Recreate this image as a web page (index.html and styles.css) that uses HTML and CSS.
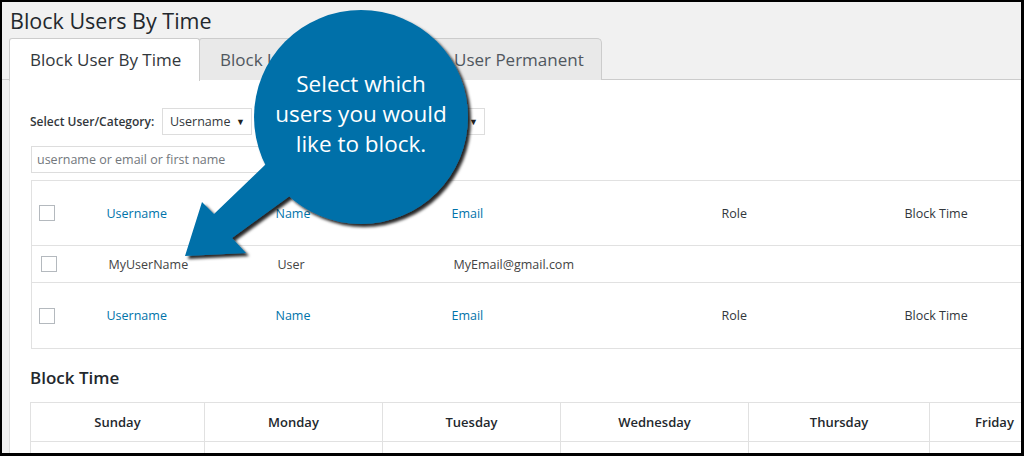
FILE: index.html
```html
<!DOCTYPE html>
<html lang="en">
<head>
<meta charset="utf-8">
<title>Block Users By Time</title>
<link rel="stylesheet" href="styles.css">
</head>
<body>
<div class="screen">
  <h1 class="page-title">Block Users By Time</h1>
  <div class="tabs">
    <div class="tab active">Block User By Time</div>
    <div class="tab">Block User By Date</div>
    <div class="tab">Block User Permanent</div>
  </div>
  <div class="panel">
    <div class="filter-row">
      <span class="filter-label">Select User/Category:</span>
      <div class="select sel-user"><span>Username</span><span class="caret">&#9660;</span></div>
      <div class="select sel-role"><span>Select Role</span><span class="caret">&#9660;</span></div>
    </div>
    <div class="search">username or email or first name</div>

    <table class="users">
      <colgroup>
        <col class="c-cb"><col class="c-user"><col class="c-name"><col class="c-email"><col class="c-role"><col class="c-time">
      </colgroup>
      <thead>
        <tr class="head">
          <th><span class="cb"></span></th>
          <th class="link">Username</th>
          <th class="link">Name</th>
          <th class="link">Email</th>
          <th>Role</th>
          <th>Block Time</th>
        </tr>
      </thead>
      <tbody>
        <tr class="data">
          <td><span class="cb"></span></td>
          <td>MyUserName</td>
          <td>User</td>
          <td>MyEmail@gmail.com</td>
          <td></td>
          <td></td>
        </tr>
      </tbody>
      <tfoot>
        <tr class="head">
          <th><span class="cb"></span></th>
          <th class="link">Username</th>
          <th class="link">Name</th>
          <th class="link">Email</th>
          <th>Role</th>
          <th>Block Time</th>
        </tr>
      </tfoot>
    </table>

    <h2 class="section-title">Block Time</h2>
    <table class="schedule">
      <colgroup>
        <col class="d1"><col class="d2"><col class="d3"><col class="d4"><col class="d5"><col class="d6"><col class="d7">
      </colgroup>
      <thead>
        <tr>
          <th>Sunday</th><th>Monday</th><th>Tuesday</th><th>Wednesday</th><th>Thursday</th><th>Friday</th><th>Saturday</th>
        </tr>
      </thead>
      <tbody>
        <tr><td></td><td></td><td></td><td></td><td></td><td></td><td></td></tr>
      </tbody>
    </table>
  </div>

  <div class="callout">
    <svg class="callout-shape" viewBox="2 2 1019 451" width="1019" height="451" aria-hidden="true">
      <defs>
        <filter id="shadow" x="-20%" y="-20%" width="140%" height="140%">
          <feDropShadow dx="3" dy="3" stdDeviation="1.4" flood-color="#000" flood-opacity="0.85"/>
        </filter>
      </defs>
      <g filter="url(#shadow)" fill="#0070a9">
        <circle cx="361" cy="117" r="107"/>
        <polygon points="185,256 202,202 214,214 266,164 298,190 232,238 246,253"/>
      </g>
    </svg>
    <div class="callout-text">Select which<br>users you would<br>like to block.</div>
  </div>
</div>
</body>
</html>
```

FILE: styles.css
```css
* { box-sizing: border-box; }

html, body {
  margin: 0;
  padding: 0;
  background: #000;
}

body {
  width: 1024px;
  height: 456px;
  overflow: hidden;
  font-family: "Open Sans", "Noto Sans", sans-serif;
  color: #444;
}

.screen {
  position: relative;
  margin: 2px 3px 3px 2px;
  width: 1019px;
  height: 451px;
  background: #f1f1f1;
  overflow: hidden;
}

.page-title {
  margin: 0;
  padding: 4px 0 0 8px;
  height: 36px;
  font-size: 21.5px;
  font-weight: 400;
  color: #23282d;
  line-height: 29px;
}

.tabs {
  display: flex;
  padding-left: 7px;
  border-bottom: 1px solid #ccc;
  height: 42px;
}

.tab {
  height: 42px;
  padding: 0 20px;
  margin-right: -1px;
  border: 1px solid #ccc;
  border-bottom: none;
  border-radius: 3px 3px 0 0;
  background: #e9e9e9;
  font-size: 17px;
  line-height: 42px;
  color: #50575e;
  white-space: nowrap;
}

.tab.active {
  background: #fff;
  height: 43px;
  margin-bottom: -1px;
  position: relative;
  z-index: 1;
  width: 191px;
  color: #32373c;
}

.tab:nth-child(2) { width: 188px; }
.tab:nth-child(3) { width: 216px; border-radius: 3px 5px 0 0; }

.panel {
  margin-left: 7px;
  background: #fff;
  border-left: 1px solid #ddd;
  height: 400px;
  padding: 28px 0 0 20px;
}

.filter-row {
  display: flex;
  align-items: center;
  height: 27px;
}

.filter-label {
  font-size: 12px;
  font-weight: 600;
  color: #32373c;
  width: 132px;
}

.select {
  display: flex;
  align-items: center;
  justify-content: space-between;
  height: 27px;
  border: 1px solid #ddd;
  padding: 0 6px 0 7px;
  font-size: 12.5px;
  color: #32373c;
}

.sel-user { width: 90px; }
.sel-role { width: 150px; margin-left: 83px; }

.caret {
  font-size: 9px;
  color: #222;
}

.search {
  margin-top: 11px;
  margin-left: 1px;
  width: 240px;
  height: 27px;
  border: 1px solid #ddd;
  padding: 0 5px;
  font-size: 12.5px;
  line-height: 25px;
  color: #72777c;
}

.users {
  margin-top: 7px;
  margin-left: 1px;
  width: 1000px;
  table-layout: fixed;
  border-collapse: collapse;
  border: 1px solid #e1e1e1;
  font-size: 12.5px;
}

.c-cb { width: 65px; }
.c-user { width: 169px; }
.c-name { width: 176px; }
.c-email { width: 270px; }
.c-role { width: 183px; }
.c-time { width: 137px; }

.users th, .users td {
  padding: 0 0 0 10px;
  text-align: left;
  font-weight: 400;
  color: #32373c;
  white-space: nowrap;
}

.users th:first-child, .users td:first-child { padding-left: 7px; }

.users .head { height: 65px; }
.users thead .head { border-bottom: 1px solid #e1e1e1; }
.users tfoot .head { border-top: 1px solid #e1e1e1; height: 66px; }

.users .data { height: 37px; }
.users .data td { padding-left: 12px; color: #444; }
.users .data td:first-child { padding-left: 9px; }

.users .link { color: #0073aa; }

.cb {
  display: block;
  width: 16px;
  height: 16px;
  border: 1px solid #b4b9be;
  background: #fff;
}

.section-title {
  margin: 19px 0 0 0;
  height: 34px;
  font-size: 17px;
  font-weight: 600;
  line-height: 20px;
  color: #23282d;
}

.schedule {
  width: 1210px;
  table-layout: fixed;
  border-collapse: collapse;
}

.d1 { width: 174px; }
.d2 { width: 178px; }
.d3 { width: 178px; }
.d4 { width: 188px; }
.d5 { width: 181px; }
.d6 { width: 130px; }
.d7 { width: 181px; }

.schedule th, .schedule td {
  border: 1px solid #e1e1e1;
  text-align: center;
}

.schedule th {
  height: 39px;
  font-size: 13px;
  font-weight: 600;
  color: #23282d;
}

.schedule td { height: 40px; }

.callout {
  position: absolute;
  left: 0;
  top: 0;
  width: 1019px;
  height: 451px;
  pointer-events: none;
}

.callout-shape {
  position: absolute;
  left: 0;
  top: 0;
}

.callout-text {
  position: absolute;
  left: 254px;
  top: 67px;
  width: 210px;
  text-align: center;
  font-family: "Open Sans", "Noto Sans", sans-serif;
  font-size: 22.5px;
  line-height: 30px;
  color: #fff;
}
```
